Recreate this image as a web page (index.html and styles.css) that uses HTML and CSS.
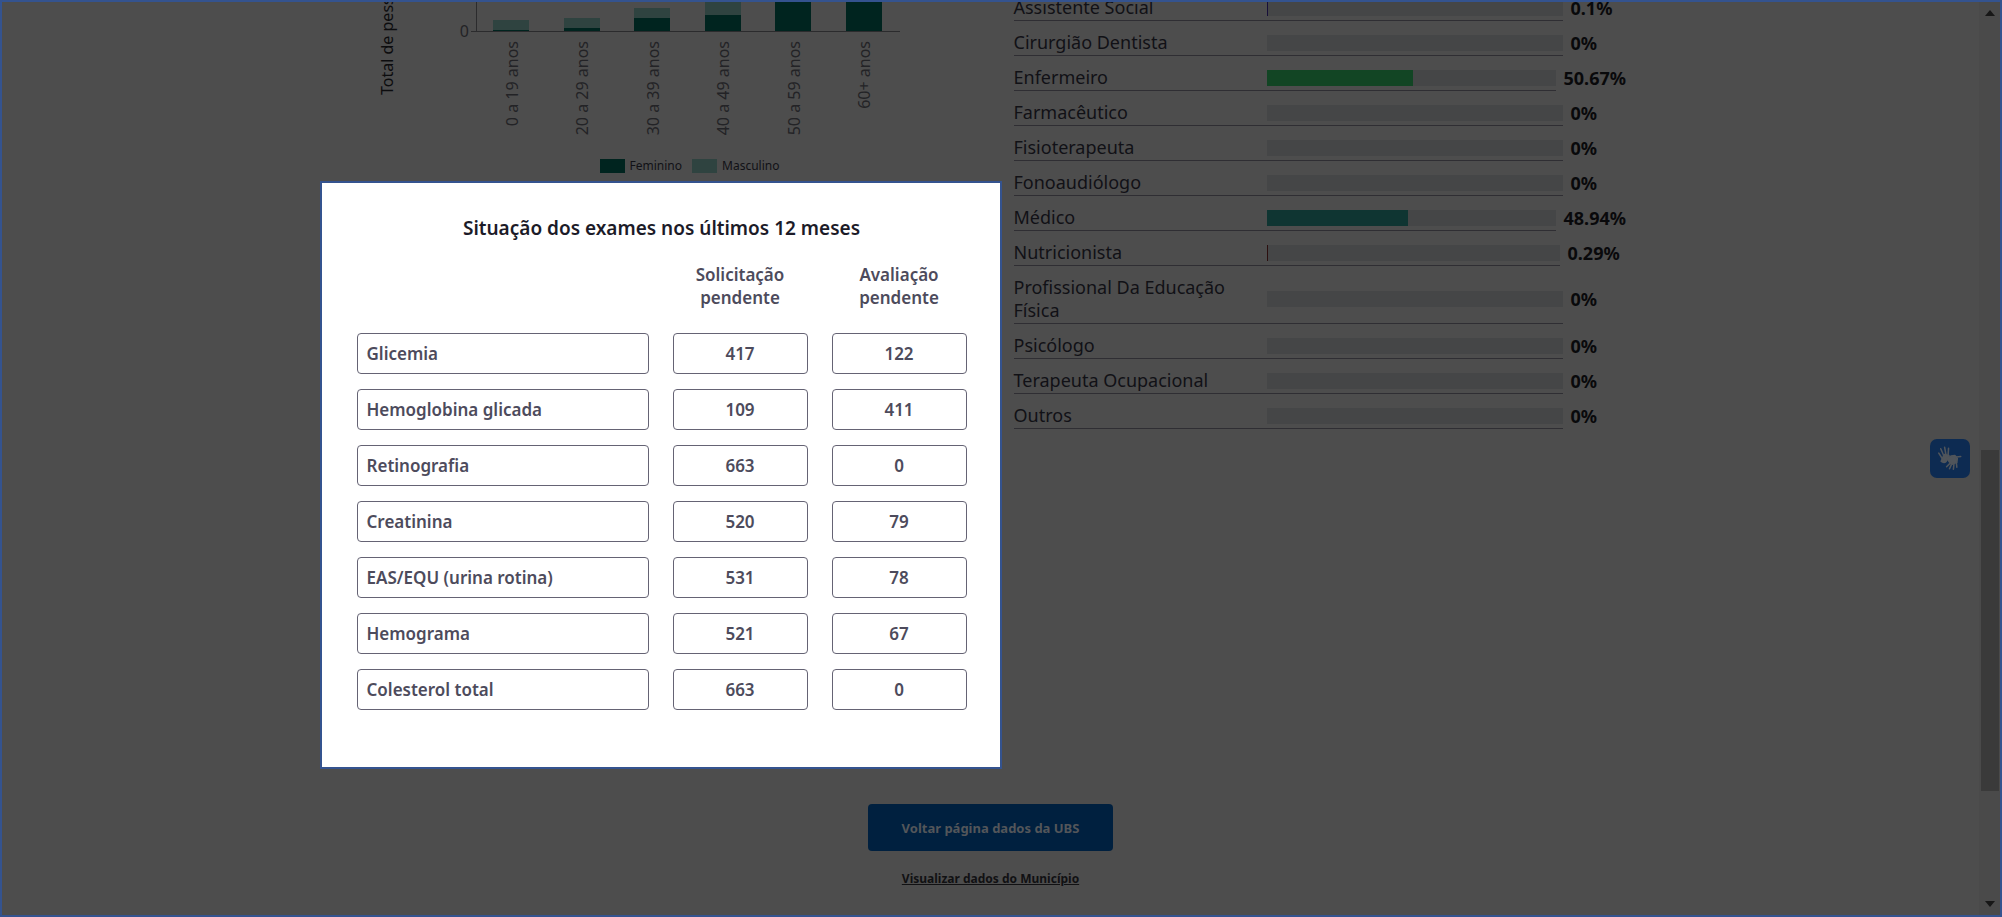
FILE: index.html
```html
<!DOCTYPE html>
<html lang="pt-BR">
<head>
<meta charset="utf-8">
<meta name="viewport" content="width=device-width, initial-scale=1">
<title>Situação dos exames</title>
<link rel="stylesheet" href="styles.css">
</head>
<body>
<div class="frame">
  <div class="page">
    <main class="columns">
      <div class="column">
        <svg class="chart" viewBox="0 0 682 145" role="img" aria-label="Total de pessoas por faixa etária">
          <g class="bar-male">
            <rect x="173" y="18" width="36" height="11"/><rect x="244" y="16" width="36" height="13"/><rect x="314" y="6" width="36" height="23"/><rect x="385" y="0" width="36" height="29"/>
          </g>
          <g class="bar-female">
            <rect x="173" y="28" width="36" height="1"/><rect x="244" y="26" width="36" height="3"/><rect x="314" y="16" width="36" height="13"/><rect x="385" y="13" width="36" height="16"/><rect x="455" y="0" width="36" height="29"/><rect x="526" y="0" width="36" height="29"/>
          </g>
          <path class="axis" d="M156.500 0V29.500M151 29.500H580"/>
          <text class="tick" x="149" y="35" text-anchor="end">0</text>
          <g class="tick" text-anchor="end">
            <text transform="translate(198 39) rotate(-90)">0 a 19 anos</text>
            <text transform="translate(268 39) rotate(-90)">20 a 29 anos</text>
            <text transform="translate(339 39) rotate(-90)">30 a 39 anos</text>
            <text transform="translate(409 39) rotate(-90)">40 a 49 anos</text>
            <text transform="translate(480 39) rotate(-90)">50 a 59 anos</text>
            <text transform="translate(550 39) rotate(-90)">60+ anos</text>
          </g>
          <text class="axis-title" transform="translate(73 93) rotate(-90)">Total de pessoas</text>
        </svg>
        <div class="legend">
          <span class="legend-item"><i class="swatch swatch-female"></i>Feminino</span>
          <span class="legend-item"><i class="swatch swatch-male"></i>Masculino</span>
        </div>
        <section class="panel">
          <h2 class="panel-title">Situação dos exames nos últimos 12 meses</h2>
          <table class="exams">
            <thead><tr><td></td><th class="count" scope="col">Solicitação pendente</th><th class="count" scope="col">Avaliação pendente</th></tr></thead>
            <tbody>
              <tr><th scope="row">Glicemia</th><td>417</td><td>122</td></tr>
              <tr><th scope="row">Hemoglobina glicada</th><td>109</td><td>411</td></tr>
              <tr><th scope="row">Retinografia</th><td>663</td><td>0</td></tr>
              <tr><th scope="row">Creatinina</th><td>520</td><td>79</td></tr>
              <tr><th scope="row">EAS/EQU (urina rotina)</th><td>531</td><td>78</td></tr>
              <tr><th scope="row">Hemograma</th><td>521</td><td>67</td></tr>
              <tr><th scope="row">Colesterol total</th><td>663</td><td>0</td></tr>
            </tbody>
          </table>
        </section>
      </div>
      <ul class="roles">
        <li class="role"><div class="role-main"><span class="role-name">Assistente Social</span><span class="track"><span class="fill fill-violet" style="width:0.1%"></span></span></div><b class="share">0.1%</b></li>
        <li class="role"><div class="role-main"><span class="role-name">Cirurgião Dentista</span><span class="track"></span></div><b class="share">0%</b></li>
        <li class="role"><div class="role-main"><span class="role-name">Enfermeiro</span><span class="track"><span class="fill fill-green" style="width:50.67%"></span></span></div><b class="share share-wide">50.67%</b></li>
        <li class="role"><div class="role-main"><span class="role-name">Farmacêutico</span><span class="track"></span></div><b class="share">0%</b></li>
        <li class="role"><div class="role-main"><span class="role-name">Fisioterapeuta</span><span class="track"></span></div><b class="share">0%</b></li>
        <li class="role"><div class="role-main"><span class="role-name">Fonoaudiólogo</span><span class="track"></span></div><b class="share">0%</b></li>
        <li class="role"><div class="role-main"><span class="role-name">Médico</span><span class="track"><span class="fill fill-teal" style="width:48.94%"></span></span></div><b class="share share-wide">48.94%</b></li>
        <li class="role"><div class="role-main"><span class="role-name">Nutricionista</span><span class="track"><span class="fill fill-red" style="width:0.29%"></span></span></div><b class="share share-mid">0.29%</b></li>
        <li class="role"><div class="role-main"><span class="role-name">Profissional Da Educação Física</span><span class="track"></span></div><b class="share">0%</b></li>
        <li class="role"><div class="role-main"><span class="role-name">Psicólogo</span><span class="track"></span></div><b class="share">0%</b></li>
        <li class="role"><div class="role-main"><span class="role-name">Terapeuta Ocupacional</span><span class="track"></span></div><b class="share">0%</b></li>
        <li class="role"><div class="role-main"><span class="role-name">Outros</span><span class="track"></span></div><b class="share">0%</b></li>
      </ul>
    </main>
    <div class="actions">
      <button class="back" type="button">Voltar página dados da UBS</button>
      <a class="city" href="#">Visualizar dados do Município</a>
    </div>
    <button class="libras" type="button" aria-label="Libras">
      <svg viewBox="0 0 40 40" aria-hidden="true">
        <g class="hand">
          <path d="M12 20 8.500 14.500M14 18 10.500 10M16 17 14.500 8.500M18 17 18.500 9.500M12 23 16 17"/>
          <path d="M11 23q3 2 5 0l3-6-5-1z"/>
          <path d="M20 25 16.500 28.500M21.500 26 19.500 30.500M24 26 23.500 31M26.500 24 27 29M26 18.500 31 18"/>
          <path d="M19 23 17 20 21 17.500 25 17 27.500 20 27 24 22 26z"/>
        </g>
      </svg>
    </button>
  </div>
  <div class="scrollbar" aria-hidden="true">
    <svg class="arrow" viewBox="0 0 10 6"><path d="M0 6 5 0l5 6z"/></svg>
    <div class="rail"><div class="thumb"></div></div>
    <svg class="arrow" viewBox="0 0 10 6"><path d="M0 0h10L5 6z"/></svg>
  </div>
</div>
</body>
</html>
```
FILE: styles.css
```css
* { box-sizing: border-box; }

body {
  margin: 0;
  background: #4d4d4d;
  color: #111116;
  font-family: "Noto Sans", "Open Sans", sans-serif;
}

.frame {
  display: flex;
  min-height: 100vh;
  border: 2px solid #34538f;
  overflow: hidden;
}

.page {
  position: relative;
  flex: 1;
  min-width: 0;
}

.columns {
  display: grid;
  grid-template-columns: 682fr 648fr;
  gap: 12px;
  max-width: 1342px;
  margin: 0 auto;
}

/* Age chart */
.chart { display: block; width: 100%; }
.bar-male { fill: #2f4340; }
.bar-female { fill: #00241f; }
.axis { fill: none; stroke: #2b2b2d; }
.tick { fill: #232326; font-size: 16px; }
.axis-title { fill: #0c0c0e; font-size: 16px; }

.legend {
  display: flex;
  justify-content: center;
  gap: 10px;
  padding: 12px 0 8px 58px;
  font-size: 12px;
  line-height: 14px;
}
.legend-item { display: flex; gap: 5px; }
.swatch { width: 25px; height: 14px; }
.swatch-female { background: #00241f; }
.swatch-male { background: #2f4340; }

/* Exams panel */
.panel {
  padding: 30px 9px 42px 11px;
  border: 2px solid #34538f;
  background: #fff;
}
.panel-title {
  margin: 0 0 5px;
  color: #1c1b28;
  font-size: 19px;
  font-weight: 600;
  line-height: 30px;
  text-align: center;
}
.exams {
  width: 100%;
  border-collapse: separate;
  border-spacing: 24px 15px;
  color: #4d4b5c;
  font-size: 17px;
  font-weight: 600;
  line-height: 23px;
  text-align: center;
}
.exams th { font-weight: 600; }
.exams td { padding: 0; }
.exams .count { width: 135px; padding: 0 0 9px; }
.exams tbody th,
.exams tbody td {
  height: 41px;
  padding: 0 9px;
  border: 1px solid #656374;
  border-radius: 4px;
}
.exams tbody th { text-align: left; }

/* Professional categories */
.roles {
  margin: -16px 33px 0 0;
  padding: 0;
  list-style: none;
  font-size: 18px;
  line-height: 23px;
}
.role { display: flex; align-items: stretch; }
.role-main {
  display: flex;
  flex: 1;
  align-items: center;
  min-height: 35px;
  padding: 10px 0 1px;
  border-bottom: 1px solid #2f2e33;
}
.role-name { flex: 0 0 253px; padding-right: 32px; }
.track {
  display: flex;
  flex: 1;
  height: 16px;
  background: #454647;
}
.fill { min-width: 1px; }
.fill-violet { background: #170f3a; }
.fill-green { background: #124524; }
.fill-teal { background: #0f3532; }
.fill-red { background: #2c0f0f; }
.share {
  display: flex;
  align-items: center;
  width: 66px;
  padding: 10px 0 1px 8px;
  color: #09090b;
  font-weight: 700;
}
.share-mid { width: 69px; }
.share-wide { width: 73px; }

/* Footer actions */
.actions {
  display: flex;
  flex-direction: column;
  align-items: center;
  gap: 18px;
  padding: 35px 0 24px;
}
.back {
  height: 47px;
  padding: 0 34px;
  border: 0;
  border-radius: 4px;
  background: #00203f;
  color: #53565a;
  font: 700 13px/20px "Noto Sans", sans-serif;
}
.city {
  color: #111113;
  font-size: 12px;
  font-weight: 700;
  line-height: 20px;
}

/* Floating accessibility button */
.libras {
  position: absolute;
  top: 437px;
  right: 9px;
  width: 40px;
  height: 39px;
  padding: 0;
  border: 0;
  border-radius: 7px;
  background: #0d2b52;
}
.libras svg { display: block; width: 100%; height: 100%; }
.hand { fill: #50555b; stroke: #50555b; stroke-width: 1.6; stroke-linecap: round; stroke-linejoin: round; }

.scrollbar {
  display: flex;
  flex-direction: column;
  align-items: center;
  width: 21px;
  padding: 8px 0;
  background: #4a4a4a;
}
.arrow { width: 10px; height: 6px; fill: #171717; }
.rail {
  display: flex;
  flex: 1;
  flex-direction: column;
  justify-content: flex-end;
  width: 18px;
  padding-bottom: 110px;
}
.thumb { height: 44%; background: #3a3a3a; }
```
